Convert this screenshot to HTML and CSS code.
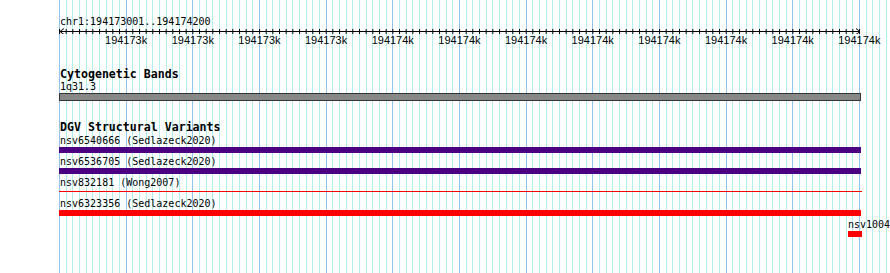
FILE: index.html
```html
<!DOCTYPE html>
<html lang="en">
<head>
    <meta charset="UTF-8">
    <title>Genome Browser - chr1:194173001..194174200</title>
    <link rel="stylesheet" href="styles.css">
</head>
<body>
    <div class="view">
        <div class="ruler">
            <div class="ref-label">chr1:194173001..194174200</div>
            <svg class="scale" width="802" height="6" viewBox="0 0 802 6">
                <defs>
                    <pattern id="ticks" x="0" y="0" width="6.6667" height="6" patternUnits="userSpaceOnUse">
                        <line x1="0.5" y1="1" x2="0.5" y2="6" stroke="#000" stroke-width="1"/>
                    </pattern>
                </defs>
                <rect x="0" y="0" width="802" height="6" fill="url(#ticks)"/>
                <line x1="1" y1="3.5" x2="801" y2="3.5" stroke="#000" stroke-width="1"/>
                <polyline points="5,0.5 1,3.5 5,6.5" fill="none" stroke="#000" stroke-width="1"/>
                <polyline points="797,0.5 801,3.5 797,6.5" fill="none" stroke="#000" stroke-width="1"/>
            </svg>
            <div class="scale-labels">
                <span>194173k</span>
                <span>194173k</span>
                <span>194173k</span>
                <span>194173k</span>
                <span>194174k</span>
                <span>194174k</span>
                <span>194174k</span>
                <span>194174k</span>
                <span>194174k</span>
                <span>194174k</span>
                <span>194174k</span>
                <span>194174k</span>
            </div>
        </div>

        <div class="track track-bands">
            <div class="track-title">Cytogenetic Bands</div>
            <div class="feature-label">1q31.3</div>
            <div class="band"></div>
        </div>

        <div class="track track-dgv">
            <div class="track-title">DGV Structural Variants</div>
            <div class="feature first">
                <div class="feature-label">nsv6540666 (Sedlazeck2020)</div>
                <div class="bar bar-purple"></div>
            </div>
            <div class="feature">
                <div class="feature-label">nsv6536705 (Sedlazeck2020)</div>
                <div class="bar bar-purple"></div>
            </div>
            <div class="feature">
                <div class="feature-label">nsv832181 (Wong2007)</div>
                <div class="bar bar-thin"><div class="bar-line"></div></div>
            </div>
            <div class="feature">
                <div class="feature-label">nsv6323356 (Sedlazeck2020)</div>
                <div class="bar bar-red"></div>
            </div>
            <div class="feature feature-edge">
                <div class="feature-label">nsv1004</div>
                <div class="bar bar-red bar-small"></div>
            </div>
        </div>
    </div>
</body>
</html>
```

FILE: styles.css
```css
* {
    margin: 0;
    padding: 0;
    box-sizing: border-box;
}

html, body {
    width: 890px;
    height: 273px;
    overflow: hidden;
    background: #fff;
}

body {
    font-family: 'DejaVu Sans Mono', monospace;
    font-size: 10px;
    line-height: 12px;
    color: #000;
}

/* grid: minor lines every 10bp, major every 100bp */
.view {
    margin-left: 59px;
    width: 831px;
    height: 273px;
    overflow: hidden;
    background-image:
        repeating-linear-gradient(to right, #90c4ee 0, #90c4ee 1px, transparent 1px, transparent 66.6667px),
        repeating-linear-gradient(to right, #b0eef0 0, #b0eef0 1px, transparent 1px, transparent 6.66667px);
}

.ruler {
    padding-top: 16px;
}

.ref-label {
    padding-left: 1px;
    height: 12px;
}

.scale {
    display: block;
}

.scale-labels {
    display: flex;
    margin-left: 33.8px;
    font-family: 'Liberation Sans', Arial, sans-serif;
    font-size: 11px;
    line-height: 12px;
    white-space: nowrap;
}

.scale-labels span {
    flex: none;
    width: 66.6667px;
    text-align: center;
}

.track-title {
    padding-left: 1px;
    font-weight: bold;
    font-size: 11.6px;
    line-height: 13px;
    height: 13px;
}

.feature-label {
    padding-left: 1px;
    height: 12px;
    white-space: nowrap;
}

.track-bands {
    margin-top: 22px;
}

.band {
    width: 802px;
    height: 8px;
    background: #888;
    border: 1px solid #333;
}

.track-dgv {
    margin-top: 20px;
}

.feature {
    margin-top: 3px;
}

.feature.first {
    margin-top: 1px;
}

.bar {
    width: 802px;
    height: 6px;
}

.bar-purple {
    background: #4b0082;
}

.bar-red {
    background: #ff0000;
}

.bar-thin {
    width: 803px;
    padding-top: 2px;
}

.bar-line {
    height: 1px;
    background: #ff0000;
}

.feature-edge {
    margin-left: 789px;
}

.feature-edge .feature-label {
    padding-left: 0;
}

.bar-small {
    width: 14px;
}
```
